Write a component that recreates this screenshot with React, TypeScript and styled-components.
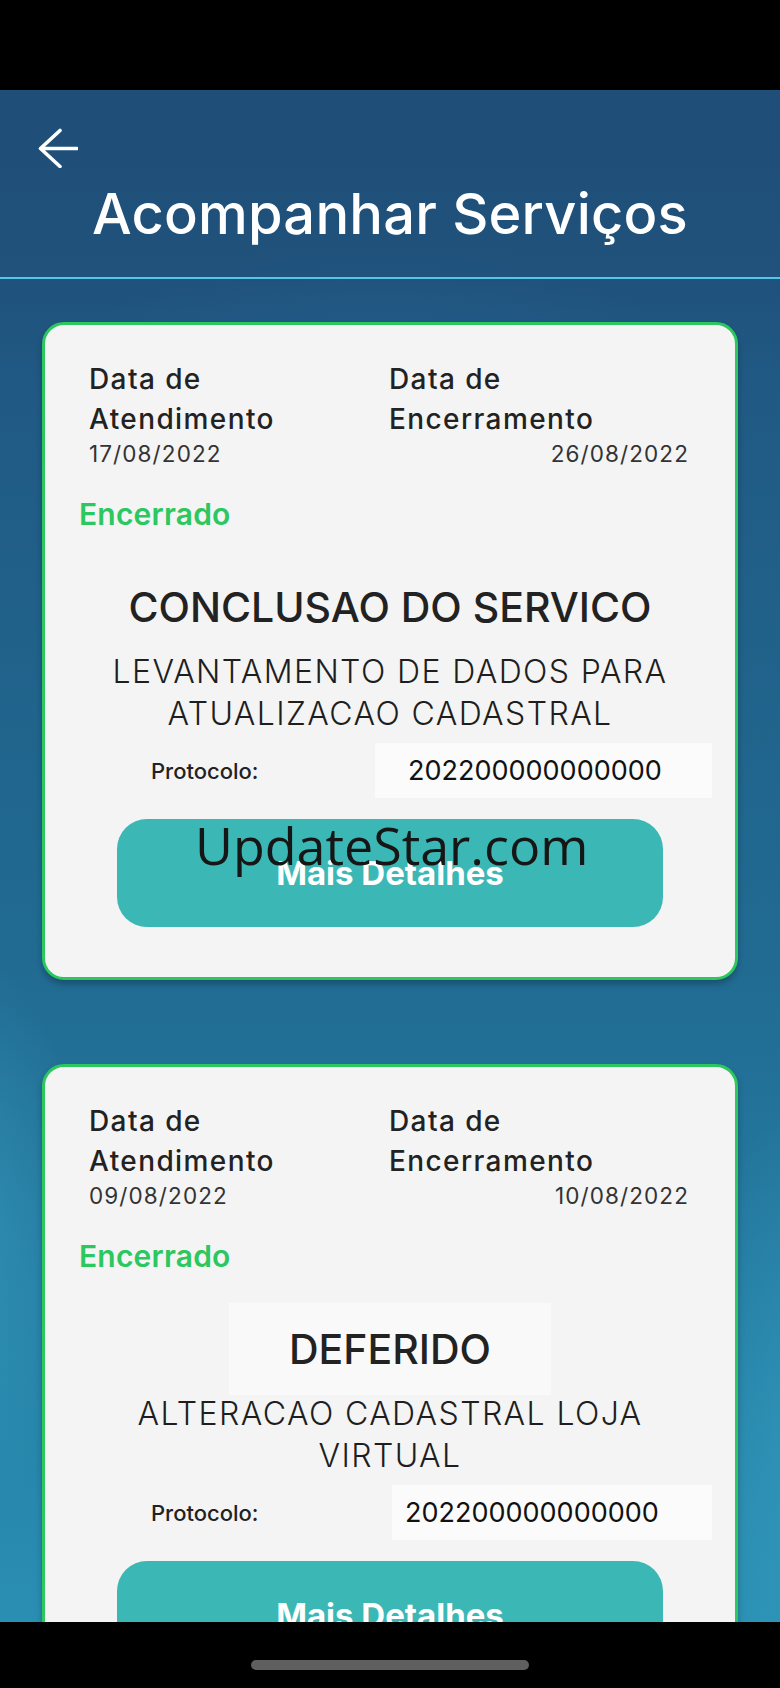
import React from "react";
import styled, { createGlobalStyle } from "styled-components";

const GlobalStyle = createGlobalStyle`
  html, body { margin: 0; padding: 0; background: #000; }
  body { font-family: Inter, "Noto Sans", sans-serif; }
  * { box-sizing: border-box; }
`;

const Phone = styled.div`
  position: relative;
  width: 780px;
  height: 1688px;
  display: flex;
  flex-direction: column;
  overflow: hidden;
  background: #000;
`;

const StatusBar = styled.div`
  height: 90px;
  flex: none;
  background: #000;
`;

const Screen = styled.main`
  flex: 1;
  min-height: 0;
  overflow: hidden;
  display: flex;
  flex-direction: column;
  background:
    radial-gradient(ellipse 180px 420px at -40px 1150px, rgba(70, 185, 215, 0.35), transparent 70%),
    radial-gradient(ellipse 200px 500px at 820px 1350px, rgba(70, 185, 215, 0.3), transparent 70%),
    radial-gradient(ellipse 500px 260px at 380px 330px, rgba(50, 120, 170, 0.25), transparent 70%),
    linear-gradient(180deg, #1f4e78 0px, #1f527c 190px, #205a84 300px, #216c93 900px, #2682a8 1300px, #2a8fb3 1540px);
`;

const Header = styled.header`
  flex: none;
  display: flex;
  flex-direction: column;
  padding: 38px 0 31px;
`;

const BackButton = styled.button`
  width: 40px;
  height: 40px;
  margin-left: 38px;
  padding: 0;
  border: 0;
  background: transparent;
  display: flex;
  align-items: center;
  justify-content: center;
  cursor: pointer;
`;

const Title = styled.h1`
  margin: 14px 0 0;
  font-family: Inter, sans-serif;
  font-weight: 500;
  font-size: 56px;
  line-height: 64px;
  letter-spacing: 0.2px;
  color: #ffffff;
  text-align: center;
`;

const Divider = styled.div`
  flex: none;
  height: 2px;
  background: #55c6e6;
`;

const List = styled.section`
  display: flex;
  flex-direction: column;
  gap: 84px;
  padding: 43px 42px 0;
`;

const Card = styled.article`
  display: flex;
  flex-direction: column;
  background: #f4f4f4;
  border: 3px solid #2cc75e;
  border-radius: 22px;
  padding: 34px 0 50px;
  box-shadow: 0 4px 6px rgba(0, 0, 0, 0.25);
  flex: none;
`;

const DatesRow = styled.div`
  display: grid;
  grid-template-columns: 1fr 1fr;
  padding: 0 46px 0 44px;
`;

const DateCol = styled.div`
  display: flex;
  flex-direction: column;
`;

const DateLabel = styled.div`
  font-size: 28px;
  line-height: 40px;
  font-weight: 500;
  letter-spacing: 1.4px;
  color: #222;
`;

const DateValue = styled.div<{ $align: "left" | "right" }>`
  font-size: 22.5px;
  line-height: 29px;
  font-weight: 400;
  letter-spacing: 1.1px;
  color: #333;
  text-align: ${(p) => p.$align};
`;

const Status = styled.div`
  margin-top: 28px;
  padding-left: 34px;
  font-size: 30px;
  line-height: 36px;
  font-weight: 600;
  letter-spacing: 0.2px;
  color: #2cc75e;
`;

const TitleBox = styled.div<{ $tinted?: boolean }>`
  align-self: center;
  margin-top: 29px;
  padding: 21px 60px;
  background: ${(p) => (p.$tinted ? "#f9f9f9" : "transparent")};
  font-size: 41px;
  line-height: 50px;
  font-weight: 500;
  color: #222;
  text-align: center;
  white-space: nowrap;
`;

const Description = styled.p`
  margin: -2px 30px 0;
  font-size: 32px;
  line-height: 42px;
  font-weight: 300;
  letter-spacing: 1.4px;
  color: #1e1e1e;
  text-align: center;
`;

const ProtocolRow = styled.div`
  margin-top: 8px;
  height: 55px;
  display: flex;
  align-items: center;
  justify-content: space-between;
  padding: 0 23px 0 106px;
`;

const ProtocolLabel = styled.span`
  font-size: 22px;
  font-weight: 500;
  color: #222;
`;

const ProtocolValue = styled.span<{ $width: number; $inset: number }>`
  height: 55px;
  width: ${(p) => p.$width}px;
  display: flex;
  align-items: center;
  padding-left: ${(p) => p.$inset}px;
  background: #fbfbfb;
  font-size: 27px;
  font-weight: 400;
  color: #111;
`;

const DetailsButton = styled.button`
  margin: 21px 72px 0;
  height: 108px;
  border: 0;
  border-radius: 30px;
  background: #3bb8b5;
  color: #fff;
  font-family: Inter, sans-serif;
  font-size: 33px;
  font-weight: 700;
  cursor: pointer;
`;

const NavBar = styled.div`
  height: 66px;
  flex: none;
  background: #000;
  display: flex;
  justify-content: center;
  padding-top: 38px;
`;

const HomePill = styled.div`
  width: 278px;
  height: 10px;
  border-radius: 5px;
  background: #5f5f5f;
`;

const Watermark = styled.div`
  position: absolute;
  left: 195px;
  top: 819px;
  font-family: "Open Sans", sans-serif;
  font-size: 52px;
  line-height: 52px;
  font-weight: 400;
  color: #161616;
  pointer-events: none;
  white-space: nowrap;
`;

type Service = {
  start: string;
  end: string;
  status: string;
  title: string;
  tintedTitle?: boolean;
  description: string;
  protocol: string;
  boxWidth: number;
  boxInset: number;
};

const services: Service[] = [
  {
    start: "17/08/2022",
    end: "26/08/2022",
    status: "Encerrado",
    title: "CONCLUSAO DO SERVICO",
    description: "LEVANTAMENTO DE DADOS PARA ATUALIZACAO CADASTRAL",
    protocol: "202200000000000",
    boxWidth: 337,
    boxInset: 33,
  },
  {
    start: "09/08/2022",
    end: "10/08/2022",
    status: "Encerrado",
    title: "DEFERIDO",
    tintedTitle: true,
    description: "ALTERACAO CADASTRAL LOJA VIRTUAL",
    protocol: "202200000000000",
    boxWidth: 320,
    boxInset: 13,
  },
];

const ArrowLeft = () => (
  <svg width="40" height="40" viewBox="0 0 40 40" fill="none">
    <path
      d="M39 20.5H2.5M22 2.5L2.5 20.5L22 38.5"
      stroke="#ffffff"
      strokeWidth="3.6"
      strokeLinecap="round"
      strokeLinejoin="round"
    />
  </svg>
);

export default function App() {
  return (
    <>
      <GlobalStyle />
      <Phone>
        <StatusBar />
        <Screen>
          <Header>
            <BackButton aria-label="Voltar">
              <ArrowLeft />
            </BackButton>
            <Title>Acompanhar Serviços</Title>
          </Header>
          <Divider />
          <List>
            {services.map((s, i) => (
              <Card key={i}>
                <DatesRow>
                  <DateCol>
                    <DateLabel>
                      Data de
                      <br />
                      Atendimento
                    </DateLabel>
                    <DateValue $align="left">{s.start}</DateValue>
                  </DateCol>
                  <DateCol>
                    <DateLabel>
                      Data de
                      <br />
                      Encerramento
                    </DateLabel>
                    <DateValue $align="right">{s.end}</DateValue>
                  </DateCol>
                </DatesRow>
                <Status>{s.status}</Status>
                <TitleBox $tinted={s.tintedTitle}>{s.title}</TitleBox>
                <Description>{s.description}</Description>
                <ProtocolRow>
                  <ProtocolLabel>Protocolo:</ProtocolLabel>
                  <ProtocolValue $width={s.boxWidth} $inset={s.boxInset}>
                    {s.protocol}
                  </ProtocolValue>
                </ProtocolRow>
                <DetailsButton>Mais Detalhes</DetailsButton>
              </Card>
            ))}
          </List>
        </Screen>
        <NavBar>
          <HomePill />
        </NavBar>
        <Watermark>UpdateStar.com</Watermark>
      </Phone>
    </>
  );
}
